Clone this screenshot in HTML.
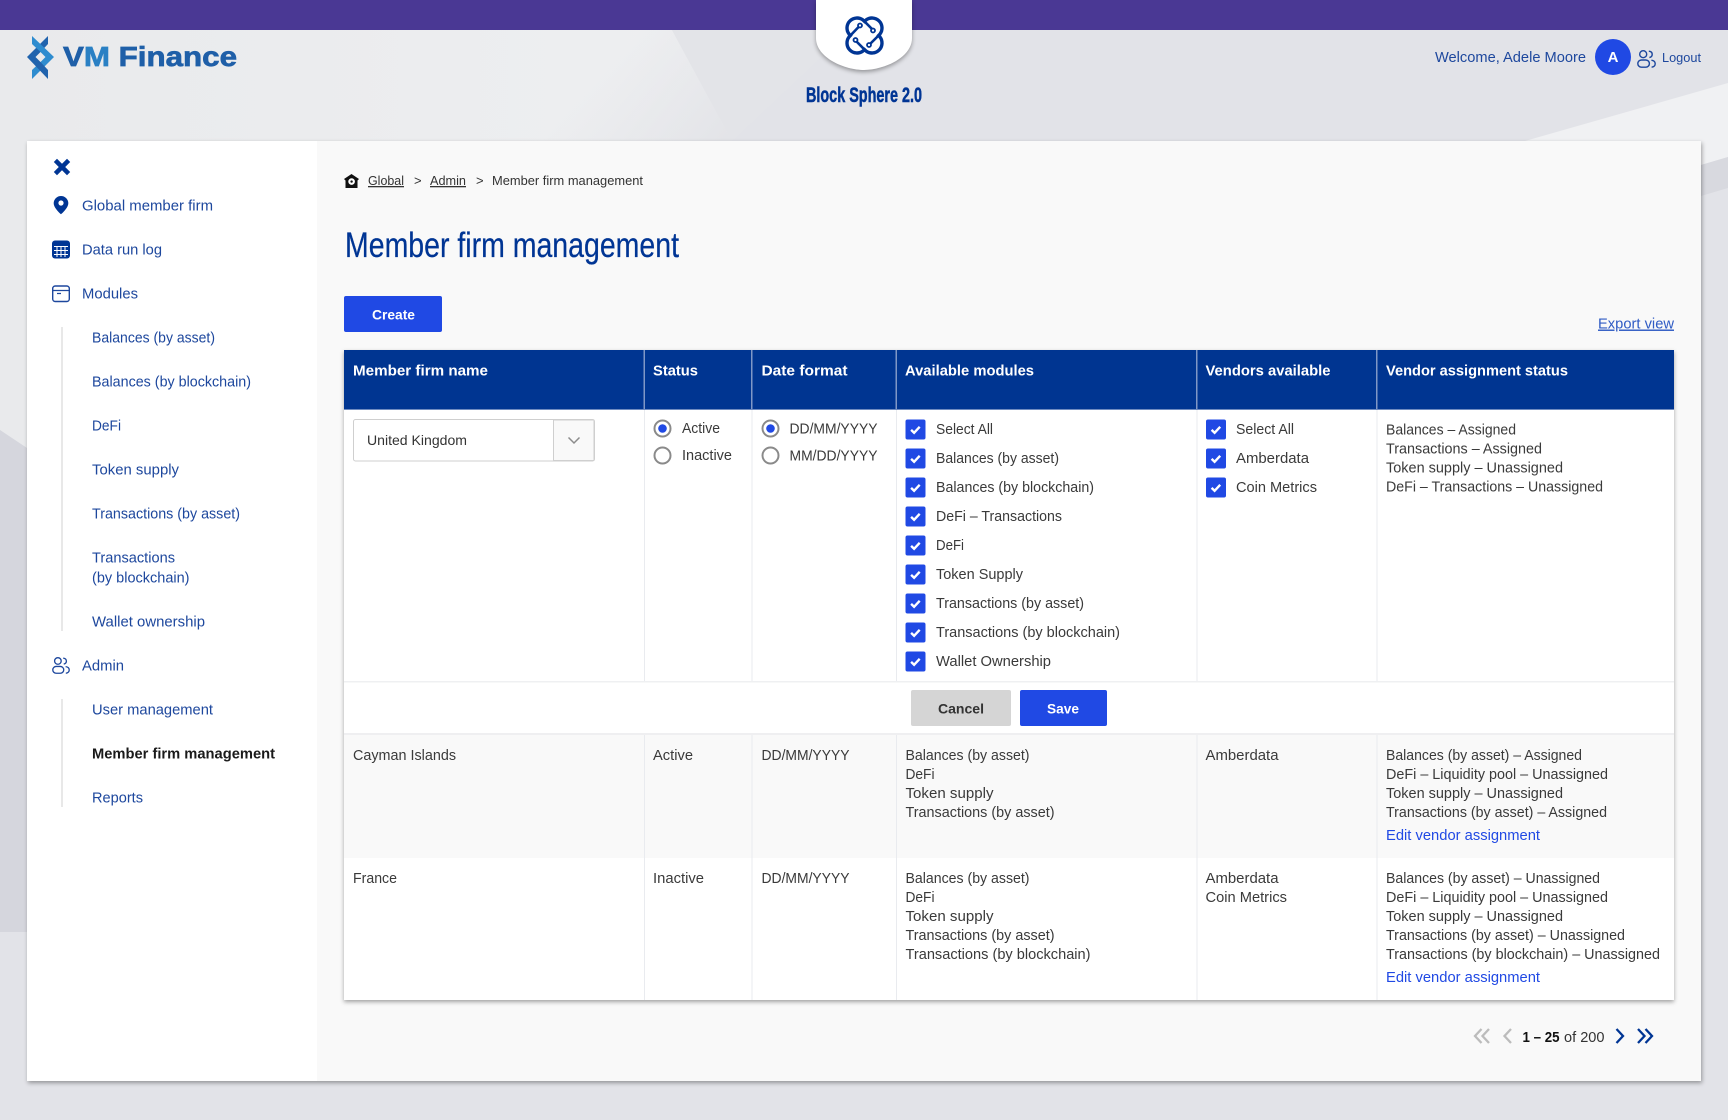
<!DOCTYPE html>
<html lang="en">
<head>
<meta charset="utf-8">
<title>Member firm management</title>
<style>
html,body{margin:0;padding:0;width:1728px;height:1120px;overflow:hidden;background:#e2e3e8}
svg{display:block}
text{font-family:"Liberation Sans",sans-serif;white-space:pre}
.s{font-size:14.5px;fill:#1d479d;transform:translateY(-.6px)}
.b{font-size:14.5px;fill:#3a3a3a}
.h{font-size:14.5px;font-weight:700;fill:#fff;transform:translateY(-.6px)}
.c{font-size:13px;fill:#333}
.l{font-size:14.5px;fill:#2049e4}
.ck{fill:none;stroke:#fff;stroke-width:2.4}
</style>
</head>
<body>
<svg xmlns="http://www.w3.org/2000/svg" width="1728" height="1120" viewBox="0 0 1728 1120">
<defs>
<linearGradient id="bgl" x1="0" y1="0" x2="1" y2="0"><stop offset="0" stop-color="#e9eaec"/><stop offset="1" stop-color="#eeeff1"/></linearGradient>
<linearGradient id="fade" gradientUnits="userSpaceOnUse" x1="620" y1="50" x2="725" y2="141"><stop offset="0" stop-color="#e3e4e8" stop-opacity="0"/><stop offset="1" stop-color="#e3e4e8" stop-opacity="1"/></linearGradient>
<symbol id="cb" viewBox="0 0 20 20" overflow="visible"><rect width="20" height="20" rx="2" fill="#2049e4"/><path d="M5.6 10.400l3 2.900 5.600-6" class="ck"/></symbol>
<symbol id="users" viewBox="0 0 19 18" overflow="visible"><g fill="none" stroke="#1d479d" stroke-width="1.400"><circle cx="6.200" cy="4.200" r="3.500"/><path d="M11.800 1.200c2 .2 3.400 1.400 3.400 3.200 0 1.600-1.200 2.800-2.800 3.100"/><rect x=".8" y="10" width="11.600" height="7.200" rx="3.600"/><path d="M14.400 10.200c2.400.3 3.800 1.700 3.800 3.600 0 1.800-1.400 3.200-3.600 3.400"/></g></symbol>
</defs>

<!-- page background -->
<rect width="1728" height="1120" fill="#e2e3e8"/>
<polygon points="0,30 672,30 732,141 0,141" fill="url(#bgl)"/>
<polygon points="0,30 672,30 732,141 0,141" fill="url(#fade)"/>
<polygon points="0,141 27,141 27,450 0,430" fill="#e9eaec"/>
<polygon points="672,30 850,30 732,141" fill="#e3e4e8"/>
<polygon points="0,430 27,448 27,932 0,932" fill="#d5d6dd"/>
<polygon points="1525,141 1728,83 1728,157 1701,165 1701,141" fill="#f0f1f3"/>
<polygon points="1701,165 1728,157 1728,188 1701,196" fill="#d8d9df"/>

<!-- top bar -->
<rect width="1728" height="30" fill="#4a3894"/>

<!-- brand logo -->
<polygon points="48,36 48,44 40.500,52 35.500,57 27,57" fill="#2063ad"/>
<polygon points="32,36 54,57 45.500,57 40.500,52 32,44" fill="#2e8ccf"/>
<polygon points="54,57 32,79 32,70 40.500,62 45.500,57" fill="#2e8ccf"/>
<polygon points="27,57 48,79 48,70 40.500,62 35.500,57" fill="#2063ad"/>
<text x="63" y="66" font-size="28" font-weight="700" textLength="174" lengthAdjust="spacingAndGlyphs" fill="#1f5fa8" stroke="#1f5fa8" stroke-width=".7">V<tspan fill="#2a80c4" stroke="#2a80c4">M</tspan> Finance</text>

<!-- centre tab -->
<path d="M816 0V38C816 58 845 70 864 70C883 70 912 58 912 38V0Z" fill="#fff" style="filter:drop-shadow(0 2px 2px rgba(0,0,0,.35))"/>
<g fill="none" stroke="#003594" stroke-width="3.400" stroke-linecap="round">
<path d="M864.500 21.400L863 20A10 10 0 0 0 849 34L850.400 35.500L849 37A10 10 0 0 0 863 51L864.500 49.600L866 51A10 10 0 0 0 880 37L878.600 35.500L880 34A10 10 0 0 0 866 20Z"/>
<g stroke-width="2.600"><path d="M850.400 35.500L860 25.500M864.500 21.400L873 30M878.600 35.500L869 45M864.500 49.600L856 41"/></g>
<g fill="#fff" stroke-width="1.800"><circle cx="860" cy="25.500" r="2"/><circle cx="873" cy="30.500" r="2"/><circle cx="869" cy="45" r="2"/><circle cx="855.500" cy="40" r="2"/></g>
</g>
<text x="806" y="102" font-size="21" font-weight="700" textLength="116" lengthAdjust="spacingAndGlyphs" fill="#003594" stroke="#003594" stroke-width=".5">Block Sphere 2.0</text>

<!-- user area -->
<text x="1435" y="62" font-size="15" fill="#1d479d" textLength="151" lengthAdjust="spacingAndGlyphs">Welcome, Adele Moore</text>
<circle cx="1613" cy="57" r="18" fill="#2049e4"/>
<text x="1613" y="62" font-size="15" font-weight="700" fill="#fff" text-anchor="middle">A</text>
<use href="#users" x="1637" y="50" width="19" height="18"/>
<text x="1662" y="62" font-size="13" fill="#1d479d" textLength="39" lengthAdjust="spacingAndGlyphs">Logout</text>

<!-- card -->
<rect x="27" y="141" width="1674" height="940" fill="#f9f9f9" style="filter:drop-shadow(1px 2px 2px rgba(0,0,0,.35))"/>
<rect x="27" y="141" width="290" height="940" fill="#fff"/>

<!-- sidebar -->
<path d="M55.400 160.400L68.600 173.600M68.600 160.400L55.400 173.600" stroke="#003594" stroke-width="4.500" fill="none"/>
<path d="M61 196a7.300 7.300 0 0 0-7.300 7.300c0 5 7.300 11 7.300 11s7.300-6 7.300-11A7.300 7.300 0 0 0 61 196z" fill="#003594"/><circle cx="61" cy="203" r="2.600" fill="#fff"/>
<text class="s" x="82" y="211" textLength="131" lengthAdjust="spacingAndGlyphs">Global member firm</text>
<rect x="52" y="240.500" width="18" height="18" rx="3" fill="#003594"/>
<path d="M54 246.500H68M54 250.500H68M54 254.500H68M57 246V257M61 246V257M65 246V257" stroke="#fff" stroke-width="1"/>
<text class="s" x="82" y="255" textLength="80" lengthAdjust="spacingAndGlyphs">Data run log</text>
<rect x="52.700" y="286" width="16.600" height="15.500" rx="2.500" fill="none" stroke="#1d479d" stroke-width="1.400"/>
<path d="M53 290.500H69M57 293.500H61" stroke="#1d479d" stroke-width="1.200"/>
<text class="s" x="82" y="299" textLength="56" lengthAdjust="spacingAndGlyphs">Modules</text>
<rect x="61" y="327" width="2" height="304" fill="#e8e8e8"/>
<text class="s" x="92" y="343" textLength="123" lengthAdjust="spacingAndGlyphs">Balances (by asset)</text>
<text class="s" x="92" y="387" textLength="159" lengthAdjust="spacingAndGlyphs">Balances (by blockchain)</text>
<text class="s" x="92" y="431" textLength="29" lengthAdjust="spacingAndGlyphs">DeFi</text>
<text class="s" x="92" y="475" textLength="87" lengthAdjust="spacingAndGlyphs">Token supply</text>
<text class="s" x="92" y="519" textLength="148" lengthAdjust="spacingAndGlyphs">Transactions (by asset)</text>
<text class="s" x="92" y="563" textLength="83" lengthAdjust="spacingAndGlyphs">Transactions</text>
<text class="s" x="92" y="583" textLength="97.500" lengthAdjust="spacingAndGlyphs">(by blockchain)</text>
<text class="s" x="92" y="627" textLength="113" lengthAdjust="spacingAndGlyphs">Wallet ownership</text>
<use href="#users" x="52" y="657" width="18" height="17"/>
<text class="s" x="82" y="671" textLength="42" lengthAdjust="spacingAndGlyphs">Admin</text>
<rect x="61" y="699" width="2" height="108" fill="#e8e8e8"/>
<text class="s" x="92" y="715" textLength="121" lengthAdjust="spacingAndGlyphs">User management</text>
<text x="92" y="758.400" font-size="14.500" font-weight="700" fill="#1a1a1a" textLength="183" lengthAdjust="spacingAndGlyphs">Member firm management</text>
<text class="s" x="92" y="803" textLength="51" lengthAdjust="spacingAndGlyphs">Reports</text>

<!-- breadcrumb -->
<path d="M351.500 174L359 179L357.500 180.500V188H345.500V180.500L344 179Z" fill="#111"/><circle cx="351.600" cy="181.600" r="3.300" fill="#fff"/><circle cx="351.600" cy="181.600" r="1.200" fill="#111"/>
<text class="c" x="368" y="185" textLength="36" lengthAdjust="spacingAndGlyphs" text-decoration="underline">Global</text>
<text class="c" x="414" y="185">&gt;</text>
<text class="c" x="430" y="185" textLength="36" lengthAdjust="spacingAndGlyphs" text-decoration="underline">Admin</text>
<text class="c" x="476" y="185">&gt;</text>
<text class="c" x="492" y="185" textLength="151" lengthAdjust="spacingAndGlyphs">Member firm management</text>

<!-- title -->
<text x="345" y="257" font-size="35" fill="#003594" stroke="#003594" stroke-width=".25" textLength="334" lengthAdjust="spacingAndGlyphs">Member firm management</text>

<!-- create / export -->
<rect x="344" y="296" width="98" height="36" rx="2" fill="#2049e4"/>
<text x="372" y="319.500" font-size="14" font-weight="700" fill="#fff" textLength="43" lengthAdjust="spacingAndGlyphs">Create</text>
<text x="1598" y="328.500" font-size="14.500" fill="#2f5bc4" textLength="76" lengthAdjust="spacingAndGlyphs" text-decoration="underline">Export view</text>

<!-- table -->
<rect x="344" y="350" width="1330" height="650" fill="#fff" style="filter:drop-shadow(0 2px 2px rgba(0,0,0,.35))"/>
<rect x="344" y="350" width="1330" height="59" fill="#003591"/>
<rect x="344" y="409" width="1330" height="1" fill="#6f8bc0"/>
<g fill="#7f97c6"><rect x="643.500" y="350" width="1.500" height="59"/><rect x="751" y="350" width="1.500" height="59"/><rect x="895.500" y="350" width="1.500" height="59"/><rect x="1196" y="350" width="1.500" height="59"/><rect x="1376" y="350" width="1.500" height="59"/></g>
<text class="h" x="353" y="376" textLength="135" lengthAdjust="spacingAndGlyphs">Member firm name</text>
<text class="h" x="653" y="376" textLength="45" lengthAdjust="spacingAndGlyphs">Status</text>
<text class="h" x="761.500" y="376" textLength="86" lengthAdjust="spacingAndGlyphs">Date format</text>
<text class="h" x="905" y="376" textLength="129" lengthAdjust="spacingAndGlyphs">Available modules</text>
<text class="h" x="1205.500" y="376" textLength="125" lengthAdjust="spacingAndGlyphs">Vendors available</text>
<text class="h" x="1386" y="376" textLength="182" lengthAdjust="spacingAndGlyphs">Vendor assignment status</text>

<!-- row backgrounds + lines -->
<rect x="344" y="735" width="1330" height="123" fill="#f9f9f9"/>
<rect x="344" y="681" width="1330" height="1.500" fill="#eff0f2"/>
<rect x="344" y="733" width="1330" height="2" fill="#efeff1"/>
<g fill="#e9ebef"><rect x="644" y="410" width="1" height="271"/><rect x="751.500" y="410" width="1" height="271"/><rect x="896" y="410" width="1" height="271"/><rect x="1196.500" y="410" width="1" height="271"/><rect x="1376.500" y="410" width="1" height="271"/>
<rect x="644" y="735" width="1" height="265"/><rect x="751.500" y="735" width="1" height="265"/><rect x="896" y="735" width="1" height="265"/><rect x="1196.500" y="735" width="1" height="265"/><rect x="1376.500" y="735" width="1" height="265"/></g>

<!-- select -->
<rect x="353.500" y="419.500" width="241" height="41.500" rx="2" fill="#fff" stroke="#cfcfcf" stroke-width="1"/>
<path d="M553.500 420H593.500a.5 .5 0 0 1 .5 .5V460a.5 .5 0 0 1-.5 .5H553.500Z" fill="#f9f9f9" stroke="#cfcfcf"/>
<path d="M568.500 437.500L574 443L579.500 437.500" fill="none" stroke="#8c8c8c" stroke-width="1.500"/>
<text x="367" y="445" font-size="14" fill="#333" textLength="100" lengthAdjust="spacingAndGlyphs">United Kingdom</text>

<!-- radios -->
<g fill="#fff" stroke="#8a8a8a" stroke-width="2"><circle cx="662.500" cy="428.500" r="8"/><circle cx="662.500" cy="455.500" r="8"/><circle cx="770.500" cy="428.500" r="8"/><circle cx="770.500" cy="455.500" r="8"/></g>
<circle cx="662.500" cy="428.500" r="4.300" fill="#2049e4"/><circle cx="770.500" cy="428.500" r="4.300" fill="#2049e4"/>
<text class="b" x="682" y="433" textLength="38" lengthAdjust="spacingAndGlyphs">Active</text>
<text class="b" x="682" y="460" textLength="50" lengthAdjust="spacingAndGlyphs">Inactive</text>
<text class="b" x="789.500" y="433.500" textLength="88" lengthAdjust="spacingAndGlyphs">DD/MM/YYYY</text>
<text class="b" x="789.500" y="460.500" textLength="88" lengthAdjust="spacingAndGlyphs">MM/DD/YYYY</text>

<!-- module checkboxes -->
<use href="#cb" x="905.500" y="419.500" width="20" height="20"/>
<use href="#cb" x="905.500" y="448.500" width="20" height="20"/>
<use href="#cb" x="905.500" y="477.500" width="20" height="20"/>
<use href="#cb" x="905.500" y="506.500" width="20" height="20"/>
<use href="#cb" x="905.500" y="535.500" width="20" height="20"/>
<use href="#cb" x="905.500" y="564.500" width="20" height="20"/>
<use href="#cb" x="905.500" y="593.500" width="20" height="20"/>
<use href="#cb" x="905.500" y="622.500" width="20" height="20"/>
<use href="#cb" x="905.500" y="651.500" width="20" height="20"/>
<text class="b" x="936" y="434" textLength="57" lengthAdjust="spacingAndGlyphs">Select All</text>
<text class="b" x="936" y="463" textLength="123" lengthAdjust="spacingAndGlyphs">Balances (by asset)</text>
<text class="b" x="936" y="492" textLength="158" lengthAdjust="spacingAndGlyphs">Balances (by blockchain)</text>
<text class="b" x="936" y="521" textLength="126" lengthAdjust="spacingAndGlyphs">DeFi – Transactions</text>
<text class="b" x="936" y="550" textLength="28" lengthAdjust="spacingAndGlyphs">DeFi</text>
<text class="b" x="936" y="579" textLength="87" lengthAdjust="spacingAndGlyphs">Token Supply</text>
<text class="b" x="936" y="608" textLength="148" lengthAdjust="spacingAndGlyphs">Transactions (by asset)</text>
<text class="b" x="936" y="637" textLength="184" lengthAdjust="spacingAndGlyphs">Transactions (by blockchain)</text>
<text class="b" x="936" y="666" textLength="115" lengthAdjust="spacingAndGlyphs">Wallet Ownership</text>

<!-- vendor checkboxes -->
<use href="#cb" x="1206" y="419.500" width="20" height="20"/>
<use href="#cb" x="1206" y="448.500" width="20" height="20"/>
<use href="#cb" x="1206" y="477.500" width="20" height="20"/>
<text class="b" x="1236" y="434" textLength="58" lengthAdjust="spacingAndGlyphs">Select All</text>
<text class="b" x="1236" y="463" textLength="73" lengthAdjust="spacingAndGlyphs">Amberdata</text>
<text class="b" x="1236" y="492" textLength="81" lengthAdjust="spacingAndGlyphs">Coin Metrics</text>

<!-- editing status -->
<text class="b" x="1386" y="434.400" textLength="130" lengthAdjust="spacingAndGlyphs">Balances – Assigned</text>
<text class="b" x="1386" y="453.400" textLength="156" lengthAdjust="spacingAndGlyphs">Transactions – Assigned</text>
<text class="b" x="1386" y="472.400" textLength="177" lengthAdjust="spacingAndGlyphs">Token supply – Unassigned</text>
<text class="b" x="1386" y="491.400" textLength="217" lengthAdjust="spacingAndGlyphs">DeFi – Transactions – Unassigned</text>

<!-- buttons -->
<rect x="911" y="690" width="100" height="36" rx="2" fill="#d5d5d5"/>
<text x="938" y="713.500" font-size="14" font-weight="700" fill="#333" textLength="46" lengthAdjust="spacingAndGlyphs">Cancel</text>
<rect x="1020" y="690" width="87" height="36" rx="2" fill="#2049e4"/>
<text x="1047" y="713.500" font-size="14" font-weight="700" fill="#fff" textLength="32" lengthAdjust="spacingAndGlyphs">Save</text>

<!-- Cayman -->
<text class="b" x="353" y="760" textLength="103" lengthAdjust="spacingAndGlyphs">Cayman Islands</text>
<text class="b" x="653" y="760" textLength="40" lengthAdjust="spacingAndGlyphs">Active</text>
<text class="b" x="761.500" y="760" textLength="88" lengthAdjust="spacingAndGlyphs">DD/MM/YYYY</text>
<text class="b" x="905.500" y="760" textLength="124" lengthAdjust="spacingAndGlyphs">Balances (by asset)</text>
<text class="b" x="905.500" y="779" textLength="29" lengthAdjust="spacingAndGlyphs">DeFi</text>
<text class="b" x="905.500" y="798" textLength="88" lengthAdjust="spacingAndGlyphs">Token supply</text>
<text class="b" x="905.500" y="817" textLength="149" lengthAdjust="spacingAndGlyphs">Transactions (by asset)</text>
<text class="b" x="1205.500" y="760" textLength="73" lengthAdjust="spacingAndGlyphs">Amberdata</text>
<text class="b" x="1386" y="760" textLength="196" lengthAdjust="spacingAndGlyphs">Balances (by asset) – Assigned</text>
<text class="b" x="1386" y="779" textLength="222" lengthAdjust="spacingAndGlyphs">DeFi – Liquidity pool – Unassigned</text>
<text class="b" x="1386" y="798" textLength="177" lengthAdjust="spacingAndGlyphs">Token supply – Unassigned</text>
<text class="b" x="1386" y="817" textLength="221" lengthAdjust="spacingAndGlyphs">Transactions (by asset) – Assigned</text>
<text class="l" x="1386" y="840" textLength="154" lengthAdjust="spacingAndGlyphs">Edit vendor assignment</text>

<!-- France -->
<text class="b" x="353" y="883" textLength="44" lengthAdjust="spacingAndGlyphs">France</text>
<text class="b" x="653" y="883" textLength="51" lengthAdjust="spacingAndGlyphs">Inactive</text>
<text class="b" x="761.500" y="883" textLength="88" lengthAdjust="spacingAndGlyphs">DD/MM/YYYY</text>
<text class="b" x="905.500" y="883" textLength="124" lengthAdjust="spacingAndGlyphs">Balances (by asset)</text>
<text class="b" x="905.500" y="902" textLength="29" lengthAdjust="spacingAndGlyphs">DeFi</text>
<text class="b" x="905.500" y="921" textLength="88" lengthAdjust="spacingAndGlyphs">Token supply</text>
<text class="b" x="905.500" y="940" textLength="149" lengthAdjust="spacingAndGlyphs">Transactions (by asset)</text>
<text class="b" x="905.500" y="959" textLength="185" lengthAdjust="spacingAndGlyphs">Transactions (by blockchain)</text>
<text class="b" x="1205.500" y="883" textLength="73" lengthAdjust="spacingAndGlyphs">Amberdata</text>
<text class="b" x="1205.500" y="902" textLength="81.500" lengthAdjust="spacingAndGlyphs">Coin Metrics</text>
<text class="b" x="1386" y="883" textLength="214" lengthAdjust="spacingAndGlyphs">Balances (by asset) – Unassigned</text>
<text class="b" x="1386" y="902" textLength="222" lengthAdjust="spacingAndGlyphs">DeFi – Liquidity pool – Unassigned</text>
<text class="b" x="1386" y="921" textLength="177" lengthAdjust="spacingAndGlyphs">Token supply – Unassigned</text>
<text class="b" x="1386" y="940" textLength="239" lengthAdjust="spacingAndGlyphs">Transactions (by asset) – Unassigned</text>
<text class="b" x="1386" y="959" textLength="274" lengthAdjust="spacingAndGlyphs">Transactions (by blockchain) – Unassigned</text>
<text class="l" x="1386" y="982" textLength="154" lengthAdjust="spacingAndGlyphs">Edit vendor assignment</text>

<!-- pagination -->
<g fill="none" stroke-width="2.300">
<path d="M1481.500 1029L1475 1036L1481.500 1043M1489 1029L1482.500 1036L1489 1043" stroke="#bcbcbc"/>
<path d="M1511 1029L1504.500 1036L1511 1043" stroke="#bcbcbc"/>
<path d="M1616.500 1029L1623 1036L1616.500 1043" stroke="#003594"/>
<path d="M1638 1029L1644.500 1036L1638 1043M1645.500 1029L1652 1036L1645.500 1043" stroke="#003594"/>
</g>
<text x="1522.500" y="1042" font-size="14.500" font-weight="700" fill="#111" textLength="37" lengthAdjust="spacingAndGlyphs">1 – 25</text>
<text x="1564" y="1042" font-size="14.500" fill="#333" textLength="40.500" lengthAdjust="spacingAndGlyphs">of 200</text>
</svg>
</body>
</html>
